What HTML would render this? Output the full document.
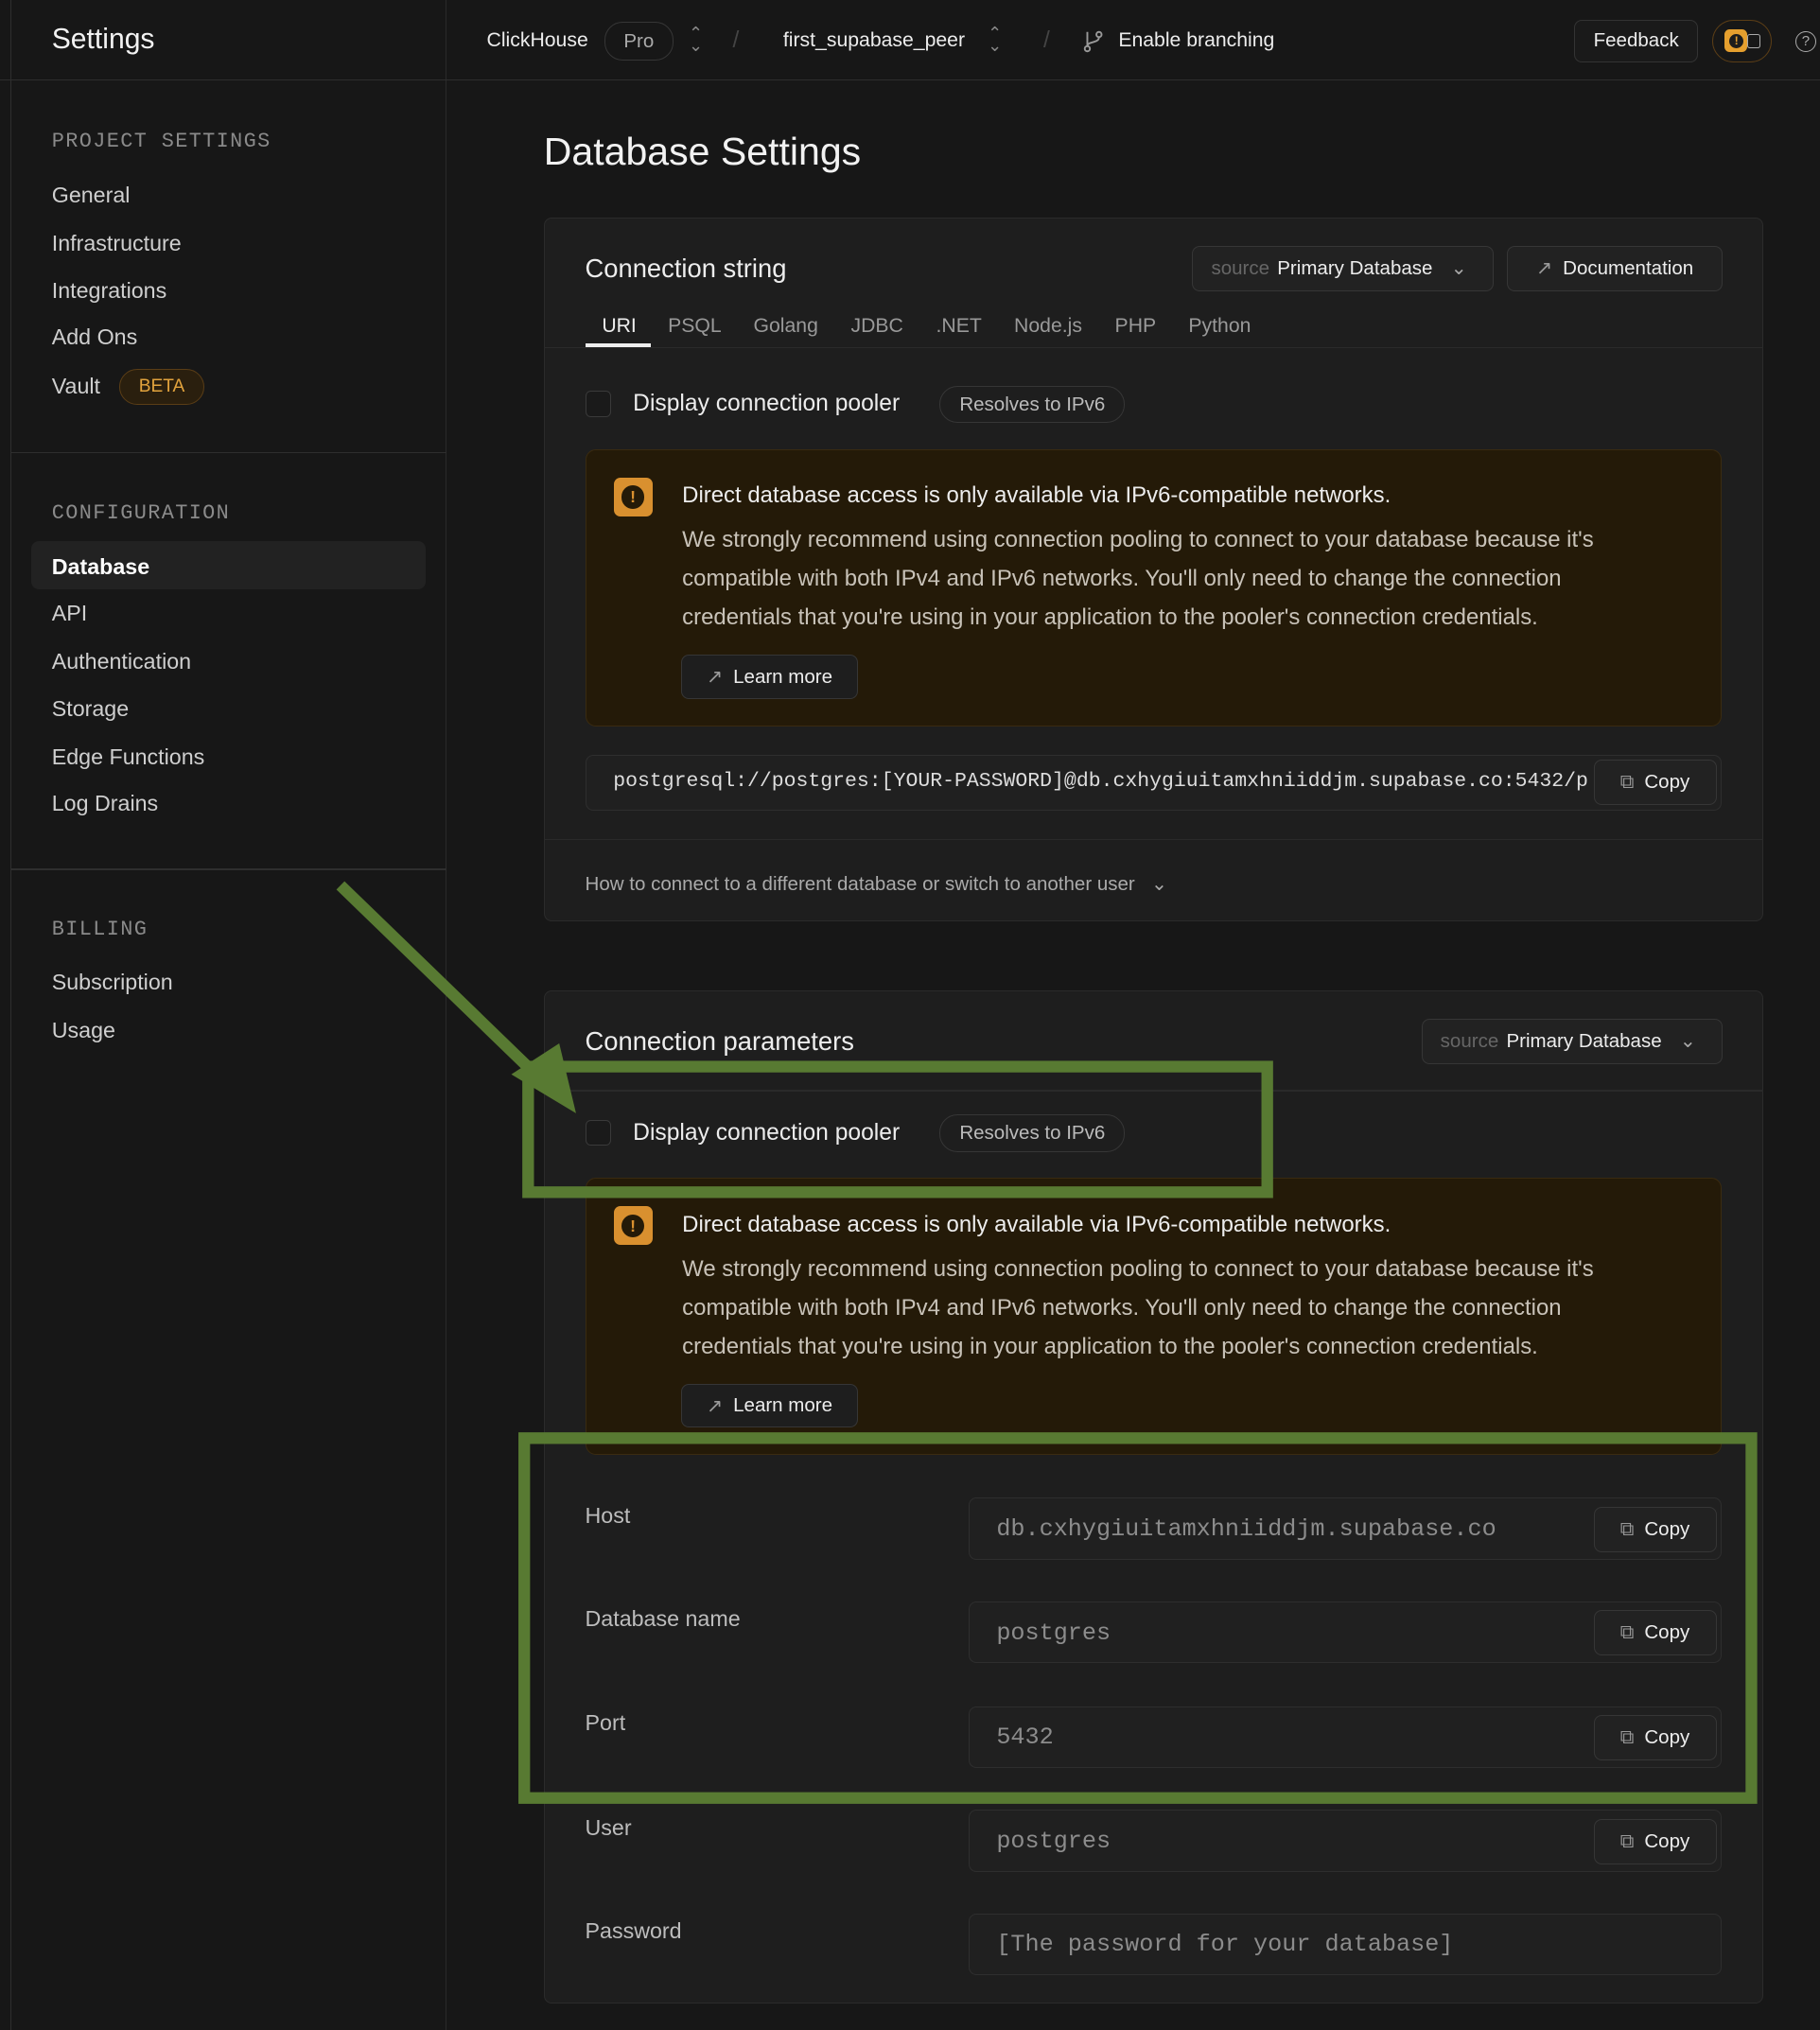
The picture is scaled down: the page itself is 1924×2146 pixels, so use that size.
<!DOCTYPE html>
<html><head><meta charset="utf-8"><style>
*{box-sizing:border-box;margin:0;padding:0}
html,body{width:1924px;height:2146px;overflow:hidden;background:#171717}
#w{zoom:1.36842;width:1406px;height:1568px;position:relative;font-family:"Liberation Sans",sans-serif;color:#ededed;background:#171717;overflow:hidden}
.a{position:absolute;white-space:nowrap}
.sb{position:absolute;left:8px;top:0;width:337px;height:1568px;background:#171717;border-left:1px solid #2e2e2e;border-right:1px solid #2a2a2a}
.top{position:absolute;left:0;top:0;width:1406px;height:62px;border-bottom:1px solid #2e2e2e}
.hd{font-family:"Liberation Mono",monospace;font-size:16px;color:#8a8a8a;letter-spacing:1px}
.it{font-size:17px;color:#cfcfcf}
.hr{position:absolute;left:8px;width:337px;height:1px;background:#2e2e2e}
.card{position:absolute;left:420px;width:942px;background:#1e1e1e;border:1px solid #2b2b2b;border-radius:6px}
.btn{position:absolute;border:1px solid #363636;border-radius:6px;background:#222;font-size:15px;color:#ededed;display:flex;align-items:center;justify-content:center;gap:8px}
.pill{position:absolute;border:1px solid #363636;border-radius:14px;font-size:15px;color:#bbb;display:flex;align-items:center;justify-content:center}
.cb{position:absolute;width:20px;height:20px;border:1px solid #3a3a3a;border-radius:4px;background:#1a1a1a}
.warn{position:absolute;left:452px;width:878px;height:214px;background:#241a08;border:1px solid #3a2b10;border-radius:8px}
.inp{position:absolute;left:748px;width:582px;height:48px;background:#202020;border:1px solid #2e2e2e;border-radius:6px;font-family:"Liberation Mono",monospace;font-size:18.4px;color:#8c8c8c;padding:13px 21px;white-space:nowrap;overflow:hidden}
.lab{position:absolute;left:452px;font-size:17px;color:#bdbdbd}
.div{position:absolute;left:420px;width:942px;height:1px;background:#2a2a2a}
.wt{position:absolute;left:527px;font-size:17.5px;color:#c8c2b8;line-height:30px;white-space:normal;width:758px}
</style></head><body><div id="w">
<div class="sb"></div>
<div class="top"></div>
<div class="a" style="left:40px;top:18px;font-size:22px;color:#f2f2f2">Settings</div>
<div class="a" style="left:376px;top:23px;font-size:15.5px">ClickHouse</div>
<div class="pill" style="left:467px;top:17px;width:53px;height:30px;color:#aaa">Pro</div>
<div class="a" style="left:532px;top:21px;font-size:13px;color:#888;line-height:10px">⌃<br>⌄</div>
<div class="a" style="left:566px;top:21px;font-size:18px;color:#444">/</div>
<div class="a" style="left:605px;top:23px;font-size:15.5px">first_supabase_peer</div>
<div class="a" style="left:763px;top:21px;font-size:13px;color:#888;line-height:10px">⌃<br>⌄</div>
<div class="a" style="left:806px;top:21px;font-size:18px;color:#444">/</div>
<svg class="a" style="left:836px;top:23px" width="18" height="18" viewBox="0 0 18 18" fill="none" stroke="#999" stroke-width="1.4"><circle cx="4" cy="15" r="2"/><circle cx="13" cy="4" r="2"/><path d="M4 13V2M13 6c0 5-9 3-9 7"/></svg>
<div class="a" style="left:864px;top:23px;font-size:15.5px">Enable branching</div>
<div class="btn" style="left:1216px;top:15px;width:96px;height:33px;background:#1a1a1a;border-color:#333">Feedback</div>
<div class="a" style="left:1323px;top:15px;width:46px;height:33px;border:1px solid #5a3d16;border-radius:17px"></div>
<div class="a" style="left:1332px;top:23px;width:18px;height:17px;background:#e59f2e;border-radius:4px"></div>
<div class="a" style="left:1336px;top:26px;width:11px;height:11px;background:#1c1c1c;border-radius:50%;color:#e59f2e;font-size:9px;text-align:center;line-height:11px;font-weight:bold">!</div>
<div class="a" style="left:1350px;top:26px;width:10px;height:11px;border:1px solid #aaa;border-radius:2px"></div>
<div class="a" style="left:1387px;top:24px;width:16px;height:16px;border:1.3px solid #aaa;border-radius:50%;font-size:11px;color:#aaa;text-align:center;line-height:14px">?</div>

<div class="a hd" style="left:40px;top:100px">PROJECT SETTINGS</div>
<div class="a it" style="left:40px;top:141px">General</div>
<div class="a it" style="left:40px;top:178px">Infrastructure</div>
<div class="a it" style="left:40px;top:215px">Integrations</div>
<div class="a it" style="left:40px;top:251px">Add Ons</div>
<div class="a it" style="left:40px;top:289px">Vault</div>
<div class="a" style="left:92px;top:285px;width:66px;height:28px;border:1px solid #5a3d16;background:#2a1f0e;border-radius:14px;color:#e2a33d;font-size:14px;text-align:center;line-height:26px">BETA</div>
<div class="hr" style="top:349px"></div>
<div class="a hd" style="left:40px;top:387px">CONFIGURATION</div>
<div class="a" style="left:24px;top:418px;width:305px;height:37px;background:#222;border-radius:6px"></div>
<div class="a it" style="left:40px;top:428px;color:#fff;font-weight:bold">Database</div>
<div class="a it" style="left:40px;top:464px">API</div>
<div class="a it" style="left:40px;top:501px">Authentication</div>
<div class="a it" style="left:40px;top:538px">Storage</div>
<div class="a it" style="left:40px;top:575px">Edge Functions</div>
<div class="a it" style="left:40px;top:611px">Log Drains</div>
<div class="hr" style="top:671px"></div>
<div class="a hd" style="left:40px;top:709px">BILLING</div>
<div class="a it" style="left:40px;top:749px">Subscription</div>
<div class="a it" style="left:40px;top:786px">Usage</div>

<div class="a" style="left:420px;top:100px;font-size:30px;color:#f2f2f2">Database Settings</div>

<!-- card 1 -->
<div class="card" style="top:168px;height:544px"></div>
<div class="a" style="left:452px;top:196px;font-size:20px">Connection string</div>
<div class="btn" style="left:921px;top:190px;width:233px;height:35px;justify-content:flex-start;padding-left:14px;gap:6px"><span style="color:#666">source</span>Primary Database<span style="color:#aaa;margin-left:8px">⌄</span></div>
<div class="btn" style="left:1164px;top:190px;width:167px;height:35px"><span style="color:#999">↗</span>Documentation</div>
<div class="a" style="left:465px;top:243px;font-size:15.5px">URI</div>
<div class="a" style="left:452px;top:265px;width:51px;height:3px;background:#eee"></div>
<div class="a" style="left:516px;top:243px;font-size:15.5px;color:#999;word-spacing:21px">PSQL Golang JDBC .NET Node.js PHP Python</div>
<div class="div" style="top:268px"></div>
<div class="cb" style="left:452px;top:302px"></div>
<div class="a" style="left:489px;top:302px;font-size:18px">Display connection pooler</div>
<div class="pill" style="left:726px;top:298px;width:143px;height:29px">Resolves to IPv6</div>
<div class="warn" style="top:347px"></div>
<div class="a" style="left:474px;top:369px;width:30px;height:30px;background:#d9902f;border-radius:5px"></div>
<div class="a" style="left:480px;top:375px;width:18px;height:18px;background:#241a08;border-radius:50%;color:#d9902f;font-size:13px;text-align:center;line-height:18px;font-weight:bold">!</div>
<div class="a" style="left:527px;top:373px;font-size:17.5px">Direct database access is only available via IPv6-compatible networks.</div>
<div class="wt" style="top:402px">We strongly recommend using connection pooling to connect to your database because it's compatible with both IPv4 and IPv6 networks. You'll only need to change the connection credentials that you're using in your application to the pooler's connection credentials.</div>
<div class="btn" style="left:526px;top:506px;width:137px;height:34px;background:#1e1e1e"><span style="color:#999">↗</span>Learn more</div>
<div class="inp" style="left:452px;width:878px;top:583px;height:43px;color:#ddd;padding:11px 21px;font-size:15.7px"><span style="display:inline-block;width:757px;overflow:hidden;vertical-align:top">postgresql://postgres:[YOUR-PASSWORD]@db.cxhygiuitamxhniiddjm.supabase.co:5432/p</span></div>
<div class="btn" style="left:1231px;top:587px;width:95px;height:35px"><span style="color:#999">⧉</span>Copy</div>
<div class="div" style="top:648px"></div>
<div class="a" style="left:452px;top:674px;font-size:15px;color:#aaa">How to connect to a different database or switch to another user &nbsp;&nbsp;⌄</div>

<!-- card 2 -->
<div class="card" style="top:765px;height:783px"></div>
<div class="a" style="left:452px;top:793px;font-size:20px">Connection parameters</div>
<div class="btn" style="left:1098px;top:787px;width:233px;height:35px;justify-content:flex-start;padding-left:14px;gap:6px"><span style="color:#666">source</span>Primary Database<span style="color:#aaa;margin-left:8px">⌄</span></div>
<div class="div" style="top:842px"></div>
<div class="cb" style="left:452px;top:865px"></div>
<div class="a" style="left:489px;top:865px;font-size:18px">Display connection pooler</div>
<div class="pill" style="left:726px;top:861px;width:143px;height:29px">Resolves to IPv6</div>
<div class="warn" style="top:910px"></div>
<div class="a" style="left:474px;top:932px;width:30px;height:30px;background:#d9902f;border-radius:5px"></div>
<div class="a" style="left:480px;top:938px;width:18px;height:18px;background:#241a08;border-radius:50%;color:#d9902f;font-size:13px;text-align:center;line-height:18px;font-weight:bold">!</div>
<div class="a" style="left:527px;top:936px;font-size:17.5px">Direct database access is only available via IPv6-compatible networks.</div>
<div class="wt" style="top:965px">We strongly recommend using connection pooling to connect to your database because it's compatible with both IPv4 and IPv6 networks. You'll only need to change the connection credentials that you're using in your application to the pooler's connection credentials.</div>
<div class="btn" style="left:526px;top:1069px;width:137px;height:34px;background:#1e1e1e"><span style="color:#999">↗</span>Learn more</div>

<div class="lab" style="top:1161px">Host</div>
<div class="inp" style="top:1157px">db.cxhygiuitamxhniiddjm.supabase.co</div>
<div class="btn" style="left:1231px;top:1164px;width:95px;height:35px"><span style="color:#999">⧉</span>Copy</div>
<div class="lab" style="top:1241px">Database name</div>
<div class="inp" style="top:1237px">postgres</div>
<div class="btn" style="left:1231px;top:1244px;width:95px;height:35px"><span style="color:#999">⧉</span>Copy</div>
<div class="lab" style="top:1321px">Port</div>
<div class="inp" style="top:1318px">5432</div>
<div class="btn" style="left:1231px;top:1325px;width:95px;height:35px"><span style="color:#999">⧉</span>Copy</div>
<div class="lab" style="top:1402px">User</div>
<div class="inp" style="top:1398px">postgres</div>
<div class="btn" style="left:1231px;top:1405px;width:95px;height:35px"><span style="color:#999">⧉</span>Copy</div>
<div class="lab" style="top:1482px">Password</div>
<div class="inp" style="top:1478px">[The password for your database]</div>

<!-- annotations -->
<svg class="a" style="left:0;top:0" width="1406" height="1568">
<g fill="none" stroke="#587a32" stroke-width="9">
<rect x="408" y="824" width="571" height="97"/>
<rect x="405" y="1111" width="948" height="278"/>
<line x1="263" y1="684" x2="420" y2="836"/>
</g>
<polygon points="445,860 395,830 432,806" fill="#587a32"/>
</svg>
</div></body></html>
